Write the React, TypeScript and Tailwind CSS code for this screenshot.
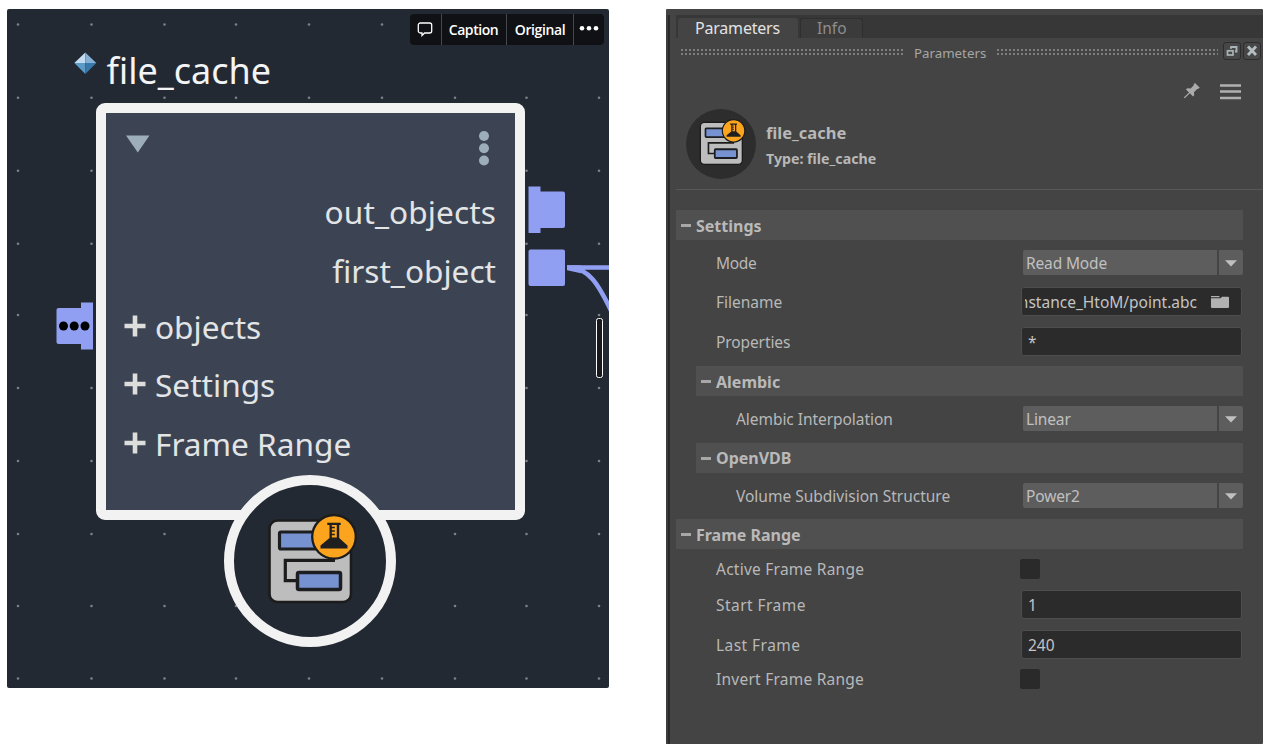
import type { ReactNode } from "react";

const GRID_X = [11, 84.5, 157.5, 229, 302, 375, 448, 519.5, 592];
const GRID_Y = [15.5, 88.7, 161.8, 234.8, 306, 379, 452, 525, 597, 669.5];

function CacheIcon({ className }: { className: string }) {
  return (
    <svg viewBox="0 0 95 95" className={className}>
      <rect x="4.500" y="10.500" width="81.500" height="81.500" rx="8" fill="#bdbdbd" stroke="#1b1b1b" strokeWidth="2.600" />
      <rect x="14.500" y="22" width="40" height="17" rx="1.500" fill="#7792d0" stroke="#1c1e22" strokeWidth="3.200" />
      <path d="M70 50.300H20.300V70.700H32" fill="none" stroke="#1c1c1c" strokeWidth="3.200" />
      <rect x="32.500" y="62.500" width="43" height="17" rx="1.500" fill="#7792d0" stroke="#1c1e22" strokeWidth="3.500" />
      <circle cx="69" cy="26.800" r="21.800" fill="#fca41d" stroke="#1c1c1c" strokeWidth="2.300" />
      <path d="M62.300 12.800h13.400v2.200h-1.500v13L82.500 35.500v3h-27v-3l9-7.500V15h-2.200z" fill="#1f1f1f" />
      <path d="M66.800 15h5v12.500h-5z" fill="#fca41d" />
      <path d="M66 17.500h3.800M66 21h3.800M66 24.500h3.800" stroke="#1f1f1f" strokeWidth="1.500" />
    </svg>
  );
}

function Caret({ className }: { className: string }) {
  return (
    <svg viewBox="0 0 12 7" className={className}>
      <path d="M0 .3h12L6 6.500z" fill="currentColor" />
    </svg>
  );
}

function NodeRow({ label }: { label: string }) {
  return (
    <div className="flex h-[58.5px] items-center pl-[18px]">
      <svg viewBox="0 0 22 22" className="mr-[9px] mb-[2px] h-[22px] w-[22px] shrink-0">
        <path d="M11 .5v21M.5 11h21" stroke="#dddddb" strokeWidth="4.600" />
      </svg>
      <span>{label}</span>
    </div>
  );
}

function GraphView() {
  return (
    <section className="relative ml-[7px] mt-[9px] h-[679px] w-[602px] shrink-0 overflow-hidden rounded-[2px] bg-[#232932] font-['Noto_Sans','Open_Sans',sans-serif] text-[#e2e4e6]">
      <svg viewBox="0 0 602 679" className="absolute inset-0 h-full w-full">
        {GRID_Y.map((y) => GRID_X.map((x) => <circle key={`${x}-${y}`} cx={x} cy={y} r="1.300" fill="#7c8187" />))}
        <path d="M78.300 43.500v10.500H67.300z" fill="#c5dcf0" />
        <path d="M78.300 43.500v10.500h11z" fill="#86b0d6" />
        <path d="M67.300 54h11v11z" fill="#5b9bc8" />
        <path d="M89.300 54H78.300v11z" fill="#3a78aa" />
        <path d="M75 293.500h11v47H74v-5.500H51.500a2 2 0 0 1-2-2V301a2 2 0 0 1 2-2H74v-5.500z" fill="#919ff2" />
        <path d="M521.500 177.500h12v5H556a2 2 0 0 1 2 2V217a2 2 0 0 1-2 2h-22.500v5h-12z" fill="#919ff2" />
        <rect x="521.500" y="240.500" width="36.500" height="36.500" rx="2" fill="#919ff2" />
        <path d="M560 258.500h42M562 258.500c20 1 29 16 42 43" fill="none" stroke="#919ff2" strokeWidth="4.600" />
        <path d="M560 256.200h14v8l-14-3z" fill="#919ff2" />
        <circle cx="56.500" cy="317" r="4.500" />
        <circle cx="67.200" cy="317" r="4.500" />
        <circle cx="78" cy="317" r="4.500" />
        <rect x="589.500" y="309.500" width="6" height="59" rx="2" fill="#17191d" stroke="#fff" />
      </svg>

      <div className="absolute left-[99.5px] top-[41px] whitespace-nowrap text-[36px] leading-[42px] text-[#f3f4f5]">file_cache</div>

      <div className="absolute left-[89px] top-[94px] h-[417px] w-[429px] rounded-[9px] border-[10px] border-[#f2f2f2] bg-[#3c4453] text-[31.6px] leading-[40px]">
        <div className="flex h-[70px] items-start justify-between pl-[20px] pr-[26px] pt-[18px] text-[#9dadb9]">
          <svg viewBox="0 0 24 18" className="mt-[4px] h-[18px] w-[24px]">
            <path d="M0 .5h23.500L11.800 17.500z" fill="currentColor" />
          </svg>
          <svg viewBox="0 0 10 36" className="h-[36px] w-[10px]">
            <circle cx="5" cy="5" r="5" fill="currentColor" />
            <circle cx="5" cy="17.200" r="5" fill="currentColor" />
            <circle cx="5" cy="29.500" r="5" fill="currentColor" />
          </svg>
        </div>
        <div className="flex h-[58.5px] items-center justify-end pr-[19px] tracking-[0.1px]">out_objects</div>
        <div className="flex h-[56px] items-center justify-end pr-[19px] pt-[2px]">first_object</div>
        <NodeRow label="objects" />
        <NodeRow label="Settings" />
        <NodeRow label="Frame Range" />
      </div>

      <div className="absolute left-[217px] top-[466px] h-[172px] w-[172px] rounded-full border-[10px] border-[#f2f2f2] bg-[#232932]">
        <CacheIcon className="ml-[31px] mt-[25px] h-[95px] w-[95px]" />
      </div>

      <div className="absolute left-[403px] top-[5px] flex h-[31px] w-[194px] items-stretch overflow-hidden rounded-[4px] bg-[#0f1114] font-['Open_Sans',sans-serif] text-[14px] font-semibold leading-[32px] text-white">
        <div className="flex w-[32px] items-center justify-center border-r border-[#45484d]">
          <svg viewBox="0 0 16 15" className="mr-[1px] h-[15px] w-[16px]">
            <path d="M3.300 1h9.400a2 2 0 0 1 2 2v6a2 2 0 0 1-2 2H7.600L5 13.500V11H3.300a2 2 0 0 1-2-2V3a2 2 0 0 1 2-2z" fill="none" stroke="#fff" strokeWidth="1.300" />
          </svg>
        </div>
        <div className="w-[65px] border-r border-[#45484d] pr-[1px] text-center tracking-[-0.45px]">Caption</div>
        <div className="w-[67px] border-r border-[#45484d] text-center tracking-[-0.4px]">Original</div>
        <div className="flex flex-1 justify-center">
          <svg viewBox="0 0 20 6" className="mt-[11px] h-[6px] w-[20px]">
            <circle cx="3" cy="3.300" r="2.300" fill="#fff" />
            <circle cx="10" cy="3.300" r="2.300" fill="#fff" />
            <circle cx="17" cy="3.300" r="2.300" fill="#fff" />
          </svg>
        </div>
      </div>
    </section>
  );
}

function Header({ title, nested, low }: { title: string; nested?: boolean; low?: boolean }) {
  return (
    <div className={`flex h-[30px] items-center bg-[#505050] pl-[5px] text-[16px] font-bold text-[#b9b9b9] ${nested ? "ml-[20px]" : ""}`}>
      <i className="mr-[5px] h-[3px] w-[10px] bg-[#a8a8a8]" />
      <span className={low ? "mt-[1px]" : ""}>{title}</span>
    </div>
  );
}

function Row({ label, nested, className, tracking = "", children }: { label: string; nested?: boolean; className: string; tracking?: string; children: ReactNode }) {
  return (
    <div className={`flex items-center ${className}`}>
      <span className={`shrink-0 whitespace-nowrap ${tracking} ${nested ? "ml-[60px] w-[284px]" : "ml-[40px] w-[304px]"}`}>{label}</span>
      {children}
    </div>
  );
}

function Select({ value }: { value: string }) {
  return (
    <div className="ml-[3px] flex h-[25px] w-[220px] gap-[2px] text-[#c0c0c0]">
      <div className="flex flex-1 items-center rounded-l-[2px] bg-[#5d5d5d] pl-[3px] tracking-[-0.15px]">{value}</div>
      <div className="flex w-[24px] items-center justify-center rounded-r-[2px] bg-[#5d5d5d]">
        <Caret className="mt-[1px] h-[7px] w-[12px]" />
      </div>
    </div>
  );
}

function Field({ children }: { children: ReactNode }) {
  return (
    <div className="ml-[1px] flex h-[29px] w-[221px] items-center overflow-hidden rounded-[3px] border border-[#4d4d4d] bg-[#2b2b2b] text-[#c4c4c4]">
      {children}
    </div>
  );
}

function Check() {
  return <div className="h-[20px] w-[20px] rounded-[2px] bg-[#2a2a2a]" />;
}

function Dots({ className }: { className: string }) {
  return <i className={`block h-[6px] bg-[radial-gradient(circle_at_1px_1px,#7e7e7e_0.8px,transparent_1px)] bg-[length:4px_4px] ${className}`} />;
}

function ParametersPanel() {
  return (
    <section className="ml-[57px] mt-[9px] h-[735px] w-[597px] shrink-0 overflow-hidden rounded-[1px] bg-[#444444] pt-[6px] font-['Noto_Sans',sans-serif] text-[15.5px] leading-[22px] text-[#b8b8b8]">
      <div className="flex h-full">
        <div className="mr-[6px] w-[4px] shrink-0 border-r-2 border-[#2b2b2b] bg-[#3c3c3c]" />
        <div className="flex-1">
          <div className="flex h-[23px] items-end bg-[#373737] pl-[2px]">
            <div className="flex h-[20px] w-[120px] items-center rounded-t-[3px] bg-[#444444] pl-[17px] text-[16px] tracking-[-0.2px] text-[#e2e2e2]">Parameters</div>
            <div className="ml-[2px] flex h-[20px] w-[63px] items-center rounded-t-[3px] border border-b-0 border-[#2f2f2f] bg-[#3b3b3b] pb-[1px] pl-[16px] text-[#8d8d8d]">Info</div>
          </div>

          <div className="flex h-[30px] pl-[5px]">
            <Dots className="mt-[11px] w-[224px]" />
            <span className="ml-[9px] w-[83px] pt-[4px] text-[13.300px] text-[#a6a6a6]">Parameters</span>
            <Dots className="mt-[11px] w-[221px]" />
            <div className="ml-[5px] mt-[4px] flex h-[18px] w-[18px] items-center justify-center rounded-[3px] border border-[#2c2c2c] bg-[#474747]">
              <svg viewBox="0 0 12 12" className="h-[12px] w-[12px] shrink-0">
                <path d="M5 2h5.500v4.500H9M5 1.200v2.600" fill="none" stroke="#a9b4b8" strokeWidth="1.900" />
                <rect x="1.500" y="5.800" width="5.500" height="4.200" fill="none" stroke="#a9b4b8" strokeWidth="1.700" />
              </svg>
            </div>
            <div className="ml-[2px] mt-[4px] flex h-[18px] w-[18px] items-center justify-center rounded-[3px] border border-[#2c2c2c] bg-[#474747]">
              <svg viewBox="0 0 12 12" className="h-[12px] w-[12px] shrink-0">
                <path d="M2 1.500l8 8.500M10 1.500l-8 8.500" stroke="#b3bec2" strokeWidth="2.800" />
              </svg>
            </div>
          </div>

          <div className="flex h-[122px] border-b border-[#575757] pl-[10px]">
            <div className="mt-[41px] flex h-[70px] w-[70px] justify-center rounded-full bg-[#2d2d2d]">
              <CacheIcon className="ml-[2px] mt-[8px] h-[49px] w-[49px]" />
            </div>
            <div className="ml-[10px] mt-[52px] w-[408px] font-bold leading-[26px]">
              <div className="text-[16.500px]">file_cache</div>
              <div className="text-[14.200px]">Type: file_cache</div>
            </div>
            <svg viewBox="0 0 16 16" className="ml-[10px] mt-[15px] h-[16px] w-[16px]">
              <path d="M11 0L15.800 4.800l-2 1.300-.6-.1L10 9.300l.2 3L9 13.500 5.900 10.300 1 15H0v-.8L5 9.500 2 6.500 3.200 5.200l3.400.3L9.800 2.300 9.700 1.300z" fill="#ababab" />
            </svg>
            <svg viewBox="0 0 21 16" className="ml-[20px] mt-[16px] h-[16px] w-[21px]">
              <path d="M0 1.500h21M0 7.500h21M0 14h21" stroke="#b0b0b0" strokeWidth="2.300" />
            </svg>
          </div>

          <div className="w-[567px] pt-[20px]">
            <Header title="Settings" low />
            <Row label="Mode" tracking="tracking-[-0.3px]" className="mt-[10px] h-[25px]"><Select value="Read Mode" /></Row>
            <Row label="Filename" className="mt-[12px] h-[29px]">
              <Field>
                <div className="ml-[3px] flex w-[172px] justify-end overflow-hidden whitespace-nowrap">instance_HtoM/point.abc</div>
                <svg viewBox="0 0 18 14" className="ml-[14px] h-[14px] w-[18px]">
                  <path d="M0 1h8l1 1.200H0zM0 3.200h9.500l1.500-1.500h6a1 1 0 0 1 1 1V12a1 1 0 0 1-1 1H1a1 1 0 0 1-1-1z" fill="#b1b1b1" />
                </svg>
              </Field>
            </Row>
            <Row label="Properties" tracking="tracking-[-0.1px]" className="mt-[11px] h-[29px]"><Field><span className="pl-[6px]">*</span></Field></Row>
            <div className="mt-[10px]"><Header title="Alembic" nested low /></div>
            <Row label="Alembic Interpolation" nested tracking="tracking-[-0.05px]" className="mt-[10px] h-[25px]"><Select value="Linear" /></Row>
            <div className="mt-[12px]"><Header title="OpenVDB" nested /></div>
            <Row label="Volume Subdivision Structure" nested className="mt-[10px] h-[25px]"><Select value="Power2" /></Row>
            <div className="mt-[11px]"><Header title="Frame Range" low /></div>
            <Row label="Active Frame Range" tracking="tracking-[0.24px]" className="mt-[10px] h-[20px]"><Check /></Row>
            <Row label="Start Frame" tracking="tracking-[0.45px]" className="mt-[11px] h-[29px]"><Field><span className="pl-[6px]">1</span></Field></Row>
            <Row label="Last Frame" tracking="tracking-[0.45px]" className="mt-[11px] h-[29px]"><Field><span className="pl-[6px]">240</span></Field></Row>
            <Row label="Invert Frame Range" tracking="tracking-[0.24px]" className="mt-[10px] h-[20px]"><Check /></Row>
          </div>
        </div>
      </div>
    </section>
  );
}

export default function App() {
  return (
    <main className="flex h-[756px] w-[1272px] items-start overflow-hidden bg-white">
      <GraphView />
      <ParametersPanel />
    </main>
  );
}
